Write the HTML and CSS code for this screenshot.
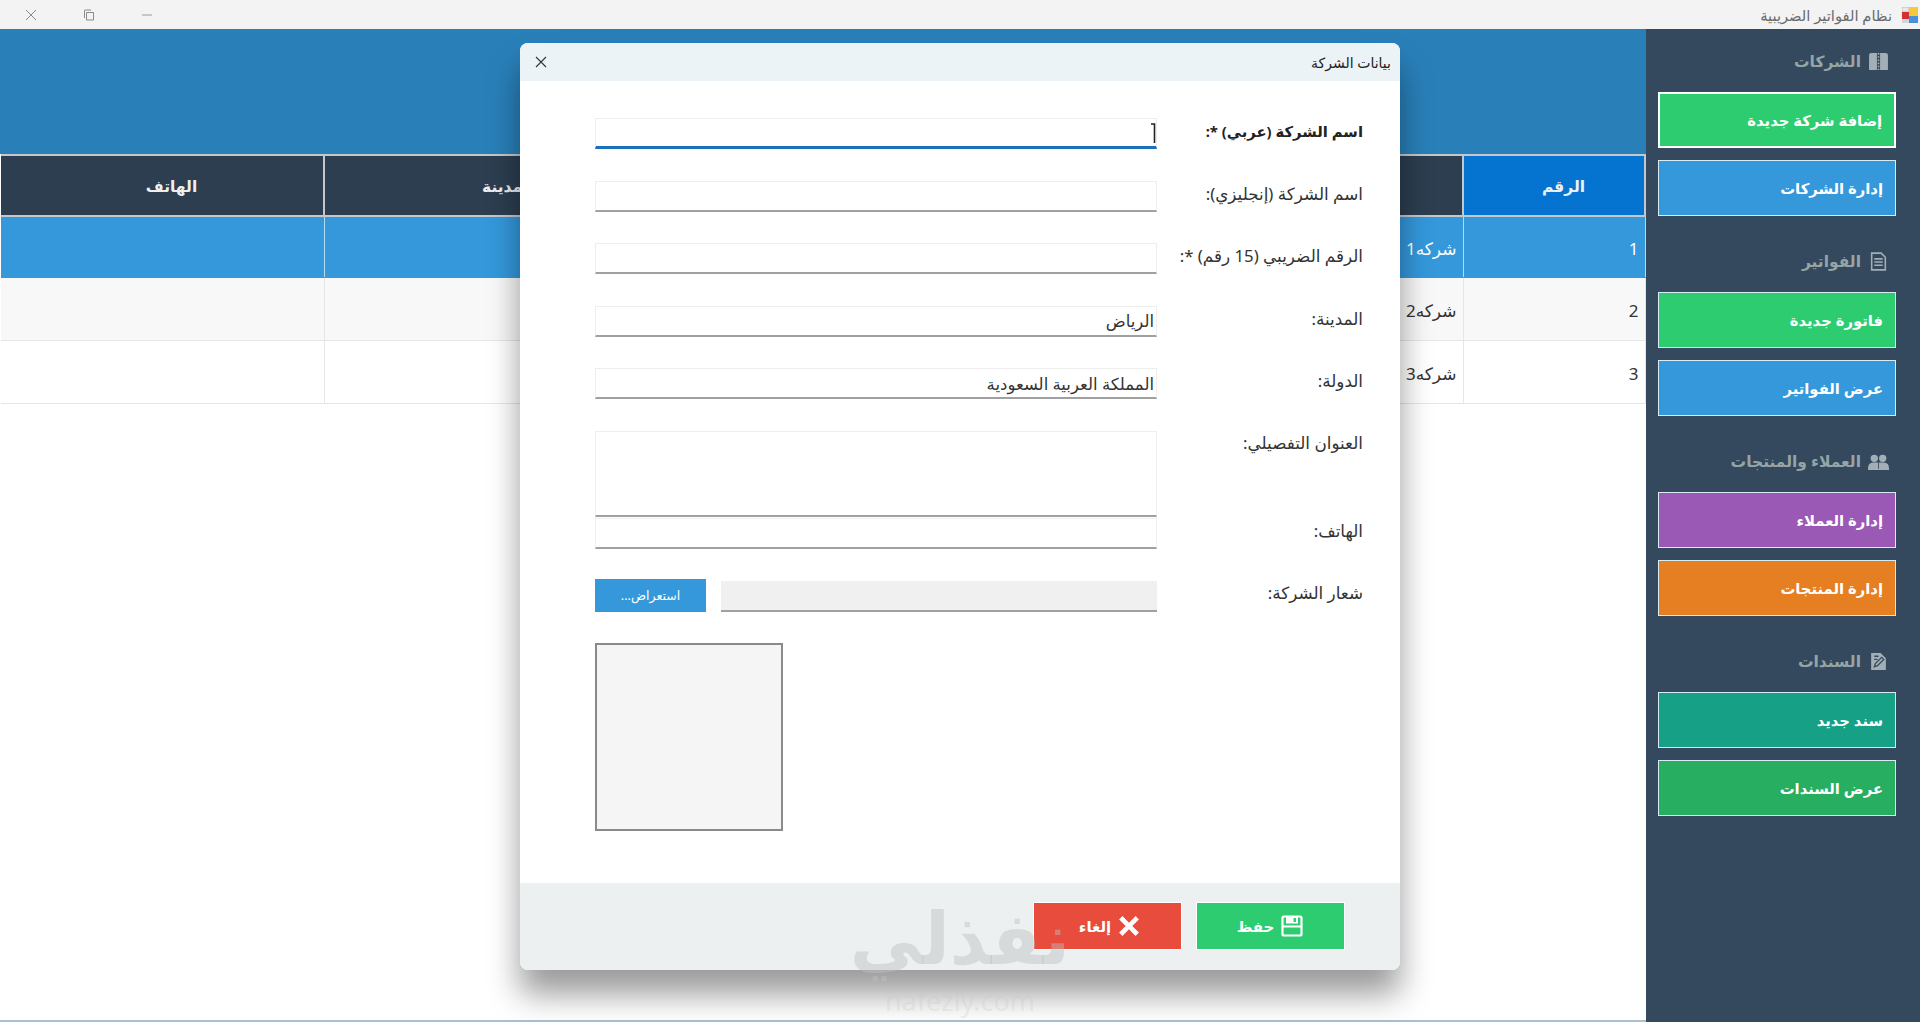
FILE: index.html
```html
<!DOCTYPE html>
<html lang="ar">
<head>
    <meta charset="UTF-8">
    <meta name="viewport" content="width=device-width, initial-scale=1.0">
    <title>نظام الفواتير الضريبية</title>
    <link rel="stylesheet" href="styles.css">
</head>
<body>
    <!-- Window title bar -->
    <header class="titlebar">
        <div class="win-controls">
            <svg class="win-icon" viewBox="0 0 12 12"><path d="M1 1l10 10M11 1L1 11" fill="none" stroke="#8a8a8a" stroke-width="1"/></svg>
            <svg class="win-icon" viewBox="0 0 12 12"><path d="M3.500 3.500h7v7.500h-7zM1.500 9V1.500q0-.5.5-.5H8" fill="none" stroke="#8a8a8a" stroke-width="1"/></svg>
            <svg class="win-icon" viewBox="0 0 12 12"><path d="M1 6h10" fill="none" stroke="#9a9a9a" stroke-width="1"/></svg>
        </div>
        <div class="app-title">
            <span>نظام الفواتير الضريبية</span>
            <svg class="app-icon" viewBox="0 0 16 16">
                <rect x="0" y="0" width="7" height="5" fill="#e8e8e8" stroke="#999" stroke-width=".5"/>
                <rect x="7" y="0" width="9" height="9" fill="#f6c93c"/>
                <rect x="0" y="5" width="7" height="7" fill="#d32f2f"/>
                <rect x="7" y="9" width="9" height="7" fill="#4a90d9"/>
                <rect x="0" y="12" width="7" height="4" fill="#cfd8dc"/>
            </svg>
        </div>
    </header>

    <div class="app">
        <main class="content">
            <div class="banner"></div>
            <table class="grid">
                <colgroup>
                    <col class="col-phone">
                    <col class="col-city">
                    <col>
                    <col class="col-num">
                </colgroup>
                <thead>
                    <tr>
                        <th>الهاتف</th>
                        <th>المدينة</th>
                        <th>اسم الشركة</th>
                        <th class="sorted">الرقم</th>
                    </tr>
                </thead>
                <tbody>
                    <tr class="selected"><td></td><td></td><td>شركه1</td><td>1</td></tr>
                    <tr class="alt"><td></td><td></td><td>شركه2</td><td>2</td></tr>
                    <tr><td></td><td></td><td>شركه3</td><td>3</td></tr>
                </tbody>
            </table>
        </main>

        <aside class="sidebar">
            <section class="side-group">
                <h3 class="side-title">
                    <span>الشركات</span>
                    <svg viewBox="0 0 20 18"><path d="M1 3q0-2 2-2h5.500v16H1zM11.500 1H17q2 0 2 2v14h-7.500z" fill="#a3afb6"/><path d="M10 1v16" stroke="#a3afb6" stroke-width="1.500" stroke-dasharray="1.500 1.500"/></svg>
                </h3>
                <button class="side-btn green focused">إضافة شركة جديدة</button>
                <button class="side-btn blue">إدارة الشركات</button>
            </section>
            <section class="side-group">
                <h3 class="side-title">
                    <span>الفواتير</span>
                    <svg viewBox="0 0 20 18"><path d="M3.500 1h9l4 4v12h-13zM6 6.500h8M6 9.500h8M6 12.500h8" fill="none" stroke="#a3afb6" stroke-width="1.500"/></svg>
                </h3>
                <button class="side-btn green">فاتورة جديدة</button>
                <button class="side-btn blue">عرض الفواتير</button>
            </section>
            <section class="side-group">
                <h3 class="side-title">
                    <span>العملاء والمنتجات</span>
                    <svg viewBox="0 0 20 18"><circle cx="6" cy="6" r="3.500" fill="#a3afb6"/><circle cx="14" cy="6" r="3.500" fill="#a3afb6"/><path d="M0 16q0-6 5-6h10q5 0 5 6v1H0z" fill="#a3afb6"/><path d="M10 4v12" stroke="#34495e" stroke-width=".8"/></svg>
                </h3>
                <button class="side-btn purple">إدارة العملاء</button>
                <button class="side-btn orange">إدارة المنتجات</button>
            </section>
            <section class="side-group">
                <h3 class="side-title">
                    <span>السندات</span>
                    <svg viewBox="0 0 20 18"><path d="M3 1h9l5 5v11H3z" fill="#a3afb6"/><path d="M6 14l1-3 6-6 2 2-6 6zM6 4h4M6 7h3" fill="none" stroke="#34495e" stroke-width="1.200"/></svg>
                </h3>
                <button class="side-btn teal">سند جديد</button>
                <button class="side-btn dark-green">عرض السندات</button>
            </section>
        </aside>
    </div>

    <!-- Company data dialog -->
    <div class="dialog">
        <div class="dialog-head">
            <svg class="dialog-close" viewBox="0 0 12 12"><path d="M1 1l10 10M11 1L1 11" fill="none" stroke="#333" stroke-width="1.100"/></svg>
            <span>بيانات الشركة</span>
        </div>

        <div class="dialog-body">
            <div class="row">
                <div class="field focus">
                    <input type="text" dir="rtl">
                    <svg class="caret" viewBox="0 0 5 20"><path d="M0 1h3.500v19" fill="none" stroke="#222" stroke-width="1.600"/></svg>
                </div>
                <label class="strong">اسم الشركة (عربي) *:</label>
            </div>
            <div class="row">
                <div class="field"><input type="text" dir="rtl"></div>
                <label>اسم الشركة (إنجليزي):</label>
            </div>
            <div class="row">
                <div class="field"><input type="text" dir="rtl"></div>
                <label>الرقم الضريبي (15 رقم) *:</label>
            </div>
            <div class="row">
                <div class="field"><input type="text" dir="rtl" value="الرياض"></div>
                <label>المدينة:</label>
            </div>
            <div class="row">
                <div class="field"><input type="text" dir="rtl" value="المملكة العربية السعودية"></div>
                <label>الدولة:</label>
            </div>
            <div class="row row-address">
                <div class="field"><textarea dir="rtl"></textarea></div>
                <label>العنوان التفصيلي:</label>
            </div>
            <div class="row row-phone">
                <div class="field"><input type="text" dir="rtl"></div>
                <label>الهاتف:</label>
            </div>
            <div class="row row-logo">
                <div class="logo-picker">
                    <button class="browse-btn" dir="rtl">استعراض...</button>
                    <div class="logo-path"></div>
                </div>
                <label>شعار الشركة:</label>
            </div>
            <div class="logo-box"></div>
        </div>

        <div class="dialog-foot">
            <button class="foot-btn cancel">
                <span>إلغاء</span>
                <svg viewBox="0 0 20 20"><path d="M1 4L4 1l6 6 6-6 3 3-6 6 6 6-3 3-6-6-6 6-3-3 6-6z" fill="#fff"/></svg>
            </button>
            <button class="foot-btn save">
                <span>حفظ</span>
                <svg viewBox="0 0 22 22"><path d="M3 1.500h16q1.500 0 1.500 1.500v16q0 1.500-1.500 1.500H3q-1.500 0-1.500-1.500V3q0-1.500 1.500-1.500z" fill="none" stroke="#fff" stroke-width="2.200"/><path d="M5 1.500h12v7H5z" fill="#fff"/><path d="M12.500 3h2.500v4h-2.500z" fill="#2ecc71"/><path d="M1.500 11.500h19" stroke="#fff" stroke-width="2"/></svg>
            </button>
        </div>
    </div>

    <!-- Watermark lying over the dialog foot -->
    <div class="watermark">
        <span class="wm-name">نفذلي</span>
        <span class="wm-url">nafezly.com</span>
    </div>
</body>
</html>
```

FILE: styles.css
```css
* {
    box-sizing: border-box;
}

html, body {
    height: 100%;
}

body {
    margin: 0;
    font-family: "Noto Sans", "DejaVu Sans", sans-serif;
    background-color: #fff;
    display: flex;
    flex-direction: column;
    overflow: hidden;
}

/* Title bar */
.titlebar {
    height: 29px;
    flex: none;
    display: flex;
    justify-content: space-between;
    align-items: center;
    background-color: #f3f3f3;
}

.win-controls {
    display: flex;
    gap: 46px;
    padding-left: 25px;
}

.win-icon {
    width: 12px;
    height: 12px;
}

.app-title {
    display: flex;
    align-items: center;
    gap: 10px;
    padding-right: 2px;
    font-size: 14.700px;
    color: #6a6a6a;
}

.app-icon {
    width: 16px;
    height: 16px;
}

/* Main area */
.app {
    flex: 1;
    display: flex;
    min-height: 0;
}

.content {
    flex: 1;
    border-bottom: 2px solid #a9c0d0;
}

.banner {
    height: 125px;
    background-color: #2980b9;
}

.grid {
    width: 1645px;
    margin-left: 1px;
    border-collapse: collapse;
    table-layout: fixed;
    font-size: 17px;
}

.col-phone {
    width: 323px;
}

.col-city {
    width: 349px;
}

.col-num {
    width: 182px;
}

.grid th {
    height: 61px;
    padding-left: 20px;
    background-color: #2c3e50;
    color: #ecf0f1;
    font-size: 15.500px;
    font-weight: bold;
    text-align: center;
    border: 1px solid #c4c8cc;
    border-width: 2px 2px 2px 0;
}

.grid th.sorted {
    background-color: #0574d0;
    border-left: 2px solid #dde;
}

.grid td {
    height: 63px;
    padding: 3px 6px 0 0;
    text-align: right;
    color: #333;
    border: 1px solid #e6e6e6;
    border-width: 0 1px 1px 0;
}

.grid tr.selected td {
    height: 61px;
    background-color: #3498db;
    color: #fff;
    border-right-color: #b5daf3;
    border-bottom-color: #3498db;
}

.grid tr.alt td {
    background-color: #f8f8f8;
}

/* Sidebar */
.sidebar {
    width: 274px;
    flex: none;
    padding: 22px 24px 0 12px;
    display: flex;
    flex-direction: column;
    gap: 35px;
    background-color: #34495e;
}

.side-group {
    display: flex;
    flex-direction: column;
    gap: 12px;
}

.side-title {
    height: 20px;
    margin: 0 0 9px;
    padding-right: 7px;
    display: flex;
    justify-content: flex-end;
    align-items: center;
    gap: 7px;
    font-size: 15.500px;
    font-weight: bold;
    color: #95a5a6;
}

.side-title svg {
    width: 21px;
    height: 19px;
}

.side-btn {
    height: 56px;
    padding: 0 12px;
    border: 1px solid #d8ecf4;
    direction: rtl;
    text-align: right;
    font-family: inherit;
    font-size: 14.800px;
    font-weight: bold;
    color: #fff;
}

.side-btn.focused {
    border: 2px solid #fff;
}

.green { background-color: #2ecc71; }
.blue { background-color: #3498db; }
.purple { background-color: #9b59b6; }
.orange { background-color: #e67e22; }
.teal { background-color: #16a085; }
.dark-green { background-color: #27ae60; }

/* Dialog */
.dialog {
    position: absolute;
    left: 520px;
    top: 43px;
    width: 880px;
    height: 927px;
    display: flex;
    flex-direction: column;
    background-color: #fff;
    border-radius: 8px;
    overflow: hidden;
    box-shadow: 0 24px 32px rgba(0, 0, 0, 0.4);
}

.dialog-head {
    height: 38px;
    flex: none;
    padding: 0 9px 0 15px;
    display: flex;
    justify-content: space-between;
    align-items: center;
    background-color: #ecf3f7;
    font-size: 14px;
    color: #222;
}

.dialog-close {
    width: 12px;
    height: 12px;
}

.dialog-body {
    flex: 1;
    padding: 37px 37px 0 75px;
    display: flex;
    flex-direction: column;
    gap: 31.500px;
}

.row {
    height: 31px;
    display: grid;
    grid-template-columns: 562px 1fr;
    align-items: center;
}

.row label {
    padding-bottom: 6px;
    text-align: right;
    direction: rtl;
    font-size: 16.800px;
    color: #333;
}

.row label.strong {
    font-size: 14.800px;
    font-weight: bold;
    color: #222;
}

.field {
    position: relative;
    height: 100%;
}

.field input, .field textarea {
    display: block;
    width: 100%;
    height: 100%;
    padding: 0 2px;
    border: 1px solid #eee;
    border-bottom: 2px solid #a0a0a0;
    border-radius: 0;
    outline: none;
    resize: none;
    font-family: inherit;
    font-size: 16.500px;
    color: #333;
}

.field.focus input {
    border-bottom: 3px solid #1e6fba;
}

.caret {
    position: absolute;
    right: 1px;
    top: 5px;
    width: 5px;
    height: 20px;
}

.row-address {
    height: 86.500px;
    align-items: start;
}

.row-address label {
    padding: 0;
}

.row-phone {
    margin-top: -30.500px;
}

.row-logo {
    height: 33px;
    margin-top: -2px;
}

.logo-picker {
    display: flex;
    gap: 15px;
    height: 100%;
}

.browse-btn {
    width: 111px;
    flex: none;
    border: none;
    background-color: #3498db;
    color: #fff;
    font-family: inherit;
    font-size: 12.500px;
}

.logo-path {
    flex: 1;
    margin-top: 2px;
    background-color: #f0f0f0;
    border-bottom: 2px solid #a0a0a0;
}

.logo-box {
    width: 188px;
    height: 188px;
    background-color: #f5f5f5;
    border: 2px solid #8a8a8a;
}

.dialog-foot {
    height: 87px;
    flex: none;
    padding: 19px 55px 0 0;
    display: flex;
    justify-content: flex-end;
    align-items: flex-start;
    gap: 14px;
    background-color: #ecf0f1;
}

.foot-btn {
    width: 149px;
    height: 48px;
    display: flex;
    justify-content: center;
    align-items: center;
    gap: 7px;
    border: 1px solid #fff;
    font-family: inherit;
    font-size: 15px;
    font-weight: bold;
    color: #fff;
}

.foot-btn svg {
    width: 22px;
    height: 22px;
}

.foot-btn.cancel {
    background-color: #e74c3c;
    padding-right: 2px;
}

.foot-btn.save {
    background-color: #2ecc71;
    padding-right: 7px;
}

/* Watermark */
.watermark {
    position: absolute;
    left: 845px;
    top: 886px;
    width: 230px;
    text-align: center;
    pointer-events: none;
}

.wm-name {
    display: block;
    font-size: 72px;
    line-height: 100px;
    font-weight: bold;
    color: rgba(190, 190, 190, 0.45);
}

.wm-url {
    display: block;
    font-size: 27px;
    line-height: 30px;
    color: rgba(200, 200, 200, 0.3);
}
```
